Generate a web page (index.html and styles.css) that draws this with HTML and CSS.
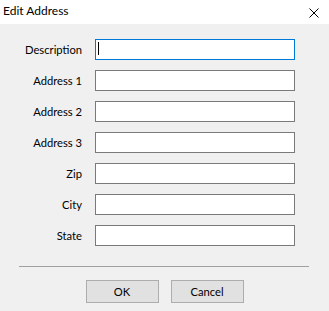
FILE: index.html
```html
<!DOCTYPE html>
<html lang="en">
<head>
    <meta charset="UTF-8">
    <title>Edit Address</title>
    <link rel="stylesheet" href="styles.css">
</head>
<body>
    <div class="dialog">
        <div class="titlebar">
            <span class="title">Edit Address</span>
            <svg class="close" width="10" height="10" viewBox="0 0 10 10">
                <path d="M0.5 0.5 L9.5 9.5 M9.5 0.5 L0.5 9.5" stroke="#000" stroke-width="1" fill="none"/>
            </svg>
        </div>

        <div class="content">
            <form class="fields">
                <label>Description</label>
                <div class="field-wrap">
                    <input type="text" class="field focused">
                    <span class="caret"></span>
                </div>
                <label>Address 1</label>
                <input type="text" class="field">
                <label>Address 2</label>
                <input type="text" class="field">
                <label>Address 3</label>
                <input type="text" class="field">
                <label>Zip</label>
                <input type="text" class="field">
                <label>City</label>
                <input type="text" class="field">
                <label>State</label>
                <input type="text" class="field">
            </form>

            <div class="separator"></div>

            <div class="button-row">
                <button class="btn">OK</button>
                <button class="btn">Cancel</button>
            </div>
        </div>
    </div>
</body>
</html>
```

FILE: styles.css
```css
body {
    margin: 0;
    font-family: Lato, 'Segoe UI', Tahoma, sans-serif;
    font-size: 11.2px;
    color: #000;
    background: #f0f0f0;
}
.dialog {
    width: 329px;
    height: 311px;
    background: #f0f0f0;
    overflow: hidden;
}
.titlebar {
    height: 24px;
    background: #fff;
    display: flex;
    align-items: center;
    justify-content: space-between;
    padding: 0 10px 0 3px;
}
.title {
    font-size: 12px;
    line-height: 24px;
    margin-top: -2px;
}
.close {
    display: block;
    margin-top: 2px;
}
.content {
    padding-top: 15px;
}
.fields {
    display: grid;
    grid-template-columns: 82px 200px;
    column-gap: 13px;
    row-gap: 10px;
    margin: 0;
}
.fields label {
    text-align: right;
    line-height: 21px;
    color: #000;
}
.field-wrap {
    position: relative;
    height: 21px;
}
.field {
    box-sizing: border-box;
    display: block;
    height: 21px;
    width: 200px;
    margin: 0;
    border: 1px solid #7a7a7a;
    background: #fff;
    padding: 0 3px;
    font: inherit;
    outline: none;
}
.field.focused {
    border-color: #0078d7;
}
.caret {
    position: absolute;
    left: 3px;
    top: 3px;
    width: 1px;
    height: 13px;
    background: #000;
}
.separator {
    margin: 20px 20px 0 19px;
    height: 1px;
    background: #a0a0a0;
}
.button-row {
    display: flex;
    justify-content: center;
    gap: 12px;
    margin-top: 13px;
}
.btn {
    box-sizing: border-box;
    width: 73px;
    height: 23px;
    background: #e1e1e1;
    border: 1px solid #adadad;
    font: inherit;
    color: #000;
    padding: 0;
}
```
